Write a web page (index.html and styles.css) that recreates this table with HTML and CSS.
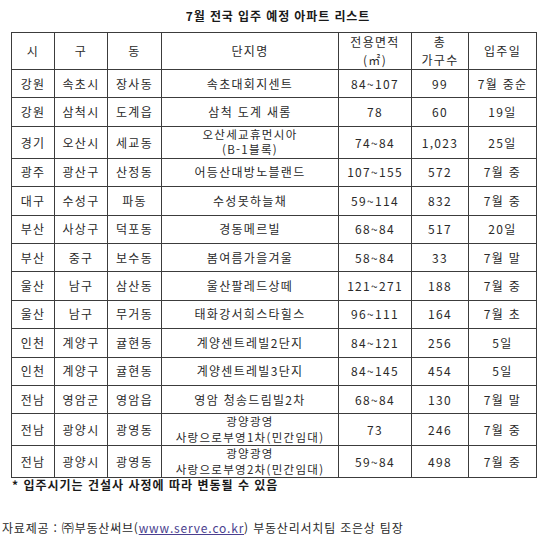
FILE: index.html
```html
<!DOCTYPE html>
<html lang="ko">
<head>
<meta charset="utf-8">
<title>7월 전국 입주 예정 아파트 리스트</title>
<link rel="stylesheet" href="styles.css">
</head>
<body>
<div class="page">
  <h1 class="title">7월 전국 입주 예정 아파트 리스트</h1>
  <table class="list">
    <colgroup>
      <col class="c1"><col class="c2"><col class="c3"><col class="c4"><col class="c5"><col class="c6"><col class="c7">
    </colgroup>
    <thead>
      <tr class="head">
        <th>시</th><th>구</th><th>동</th><th>단지명</th>
        <th><span class="line">전용면적</span><span class="line">(㎡)</span></th>
        <th><span class="line">총</span><span class="line">가구수</span></th>
        <th>입주일</th>
      </tr>
    </thead>
    <tbody>
      <tr><td>강원</td><td>속초시</td><td>장사동</td><td>속초대회지센트</td><td>84~107</td><td>99</td><td>7월 중순</td></tr>
      <tr><td>강원</td><td>삼척시</td><td>도계읍</td><td>삼척 도계 새롬</td><td>78</td><td>60</td><td>19일</td></tr>
      <tr class="double"><td>경기</td><td>오산시</td><td>세교동</td><td><span class="line">오산세교휴먼시아</span><span class="line">(B-1블록)</span></td><td>74~84</td><td>1,023</td><td>25일</td></tr>
      <tr><td>광주</td><td>광산구</td><td>산정동</td><td>어등산대방노블랜드</td><td>107~155</td><td>572</td><td>7월 중</td></tr>
      <tr><td>대구</td><td>수성구</td><td>파동</td><td>수성못하늘채</td><td>59~114</td><td>832</td><td>7월 중</td></tr>
      <tr><td>부산</td><td>사상구</td><td>덕포동</td><td>경동메르빌</td><td>68~84</td><td>517</td><td>20일</td></tr>
      <tr><td>부산</td><td>중구</td><td>보수동</td><td>봄여름가을겨울</td><td>58~84</td><td>33</td><td>7월 말</td></tr>
      <tr><td>울산</td><td>남구</td><td>삼산동</td><td>울산팔레드상떼</td><td>121~271</td><td>188</td><td>7월 중</td></tr>
      <tr><td>울산</td><td>남구</td><td>무거동</td><td>태화강서희스타힐스</td><td>96~111</td><td>164</td><td>7월 초</td></tr>
      <tr><td>인천</td><td>계양구</td><td>귤현동</td><td>계양센트레빌2단지</td><td>84~121</td><td>256</td><td>5일</td></tr>
      <tr><td>인천</td><td>계양구</td><td>귤현동</td><td>계양센트레빌3단지</td><td>84~145</td><td>454</td><td>5일</td></tr>
      <tr><td>전남</td><td>영암군</td><td>영암읍</td><td>영암 청송드림빌2차</td><td>68~84</td><td>130</td><td>7월 말</td></tr>
      <tr class="double"><td>전남</td><td>광양시</td><td>광영동</td><td><span class="line">광양광영</span><span class="line">사랑으로부영1차(민간임대)</span></td><td>73</td><td>246</td><td>7월 중</td></tr>
      <tr class="double"><td>전남</td><td>광양시</td><td>광영동</td><td><span class="line">광양광영</span><span class="line">사랑으로부영2차(민간임대)</span></td><td>59~84</td><td>498</td><td>7월 중</td></tr>
    </tbody>
  </table>
  <p class="note">* 입주시기는 건설사 사정에 따라 변동될 수 있음</p>
  <p class="source">자료제공 : ㈜부동산써브(<a class="link" href="#">www.serve.co.kr</a>) 부동산리서치팀 조은상 팀장</p>
</div>
</body>
</html>
```

FILE: styles.css
```css
html, body {
  margin: 0;
  padding: 0;
  background: #ffffff;
}

body {
  font-family: "Noto Sans CJK KR", "Noto Sans", "Liberation Sans", sans-serif;
  color: #2a2a2a;
  font-size: 12px;
}

.page {
  width: 550px;
  height: 542px;
  overflow: hidden;
}

.title {
  margin: 0;
  padding-top: 9px;
  height: 23px;
  box-sizing: border-box;
  text-align: center;
  font-size: 12px;
  line-height: 14px;
  font-weight: bold;
  letter-spacing: 0.9px;
  color: #1a1a1a;
  padding-left: 6px;
}

.list {
  margin-left: 11px;
  margin-top: 9px;
  border-collapse: collapse;
  table-layout: fixed;
  width: 526px;
}

.c1 { width: 43px; }
.c2 { width: 53px; }
.c3 { width: 54px; }
.c4 { width: 177px; }
.c5 { width: 73px; }
.c6 { width: 57px; }
.c7 { width: 68px; }

.list th,
.list td {
  border: 1px solid #3c3c3c;
  padding: 0;
  text-align: center;
  vertical-align: middle;
  font-weight: normal;
  letter-spacing: 1.3px;
  line-height: 14px;
  white-space: nowrap;
}

.head th {
  height: 36px;
  line-height: 18px;
}

.list td {
  height: 27.4px;
}

.list tr.double td {
  height: 31px;
  line-height: 15.5px;
}

.list tr.double .line {
  font-size: 11.5px;
}

.line {
  display: block;
}

.note {
  margin: 0;
  padding-left: 12px;
  font-size: 12px;
  line-height: 14px;
  font-weight: bold;
  letter-spacing: 1px;
  color: #1a1a1a;
}

.source {
  margin: 0;
  margin-top: 29px;
  padding-left: 2px;
  font-size: 12px;
  line-height: 14px;
  letter-spacing: 0.8px;
}

.link {
  color: #4b3f8f;
  text-decoration: underline;
}
```
